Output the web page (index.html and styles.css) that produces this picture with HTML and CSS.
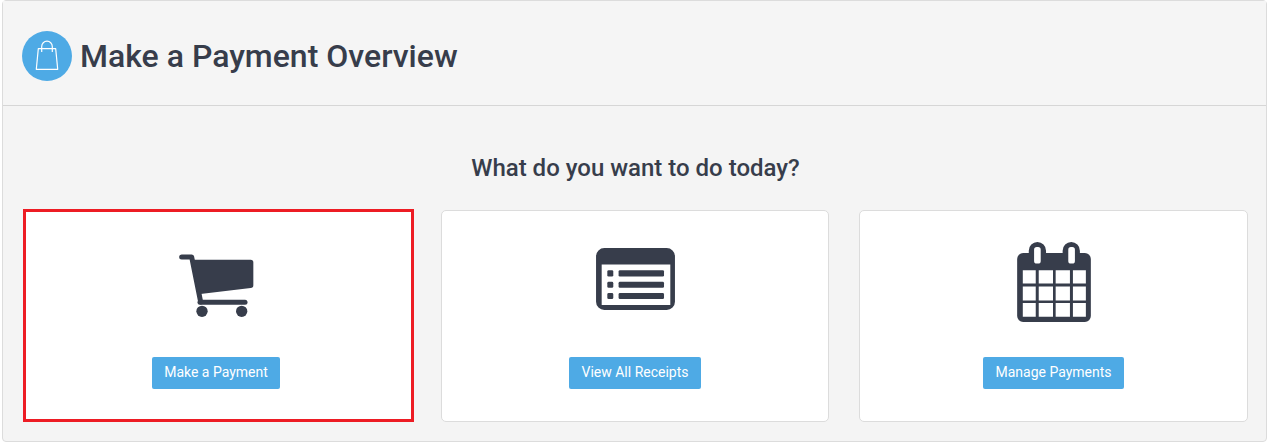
FILE: index.html
```html
<!DOCTYPE html>
<html lang="en">
<head>
    <meta charset="UTF-8">
    <meta name="viewport" content="width=device-width, initial-scale=1.0">
    <title>Make a Payment Overview</title>
    <link rel="stylesheet" href="styles.css">
</head>
<body>

    <div class="panel">
        <!-- Header -->
        <div class="panel-header">
            <span class="header-icon">
                <svg width="24" height="32" viewBox="0 -1 24 32" fill="none" stroke="#fff" stroke-width="1.2">
                    <path d="M3.300 7.700h17.400l2 20.600h-21.400z" stroke-linejoin="round"/>
                    <path d="M6.700 11v-5.500a5.300 5.300 0 0 1 10.600 0v5.500"/>
                </svg>
            </span>
            <h1>Make a Payment Overview</h1>
        </div>

        <div class="panel-body">
            <h2>What do you want to do today?</h2>

            <div class="cards">
                <div class="card card-selected">
                    <svg class="card-icon icon-cart" width="75" height="64" viewBox="117 68 225 192" fill="#373d4b">
                        <path d="M125 80H155L182 215" fill="none" stroke="#373d4b" stroke-width="15" stroke-linecap="round" stroke-linejoin="round"/>
                        <path d="M155 88H332a8 8 0 0 1 8 8V165a8 8 0 0 1-8 8L175 192z"/>
                        <path d="M180 216H315" fill="none" stroke="#373d4b" stroke-width="15" stroke-linecap="round"/>
                        <circle cx="186" cy="243" r="17"/>
                        <circle cx="305" cy="243" r="17"/>
                    </svg>
                    <a href="#" class="btn">Make a Payment</a>
                </div>

                <div class="card card-middle">
                    <svg class="card-icon icon-list" width="79" height="62" viewBox="75 55 238 187" fill="#373d4b" fill-rule="evenodd">
                        <path d="M100 55H288a25 25 0 0 1 25 25V217a25 25 0 0 1-25 25H100a25 25 0 0 1-25-25V80a25 25 0 0 1 25-25zM92 105V227H299V105z"/>
                        <rect x="109" y="122" width="18" height="19" rx="4"/>
                        <rect x="143" y="122" width="137" height="19" rx="4"/>
                        <rect x="109" y="157" width="18" height="18" rx="4"/>
                        <rect x="143" y="157" width="137" height="18" rx="4"/>
                        <rect x="109" y="191" width="18" height="18" rx="4"/>
                        <rect x="143" y="191" width="137" height="18" rx="4"/>
                    </svg>
                    <a href="#" class="btn">View All Receipts</a>
                </div>

                <div class="card">
                    <svg class="card-icon icon-calendar" width="74" height="80" viewBox="80 37 222 241" fill="#373d4b" fill-rule="evenodd">
                        <path d="M115 70V63a26 26 0 0 1 52 0V70H217V63a26 26 0 0 1 52 0V70H284a18 18 0 0 1 18 18V260a18 18 0 0 1-18 18H98a18 18 0 0 1-18-18V88a18 18 0 0 1 18-18z
                                 M131 60V94a8 8 0 0 0 8 8H143a8 8 0 0 0 8-8V60a8 8 0 0 0-8-8H139a8 8 0 0 0-8 8z
                                 M234 60V94a8 8 0 0 0 8 8H246a8 8 0 0 0 8-8V60a8 8 0 0 0-8-8H242a8 8 0 0 0-8 8z
                                 M97 122V162H136V122z M145 122V162H188V122z M196 122V162H239V122z M248 122V162H287V122z
                                 M97 171V213H136V171z M145 171V213H188V171z M196 171V213H239V171z M248 171V213H287V171z
                                 M97 221V262H136V221z M145 221V262H188V221z M196 221V262H239V221z M248 221V262H287V221z"/>
                    </svg>
                    <a href="#" class="btn">Manage Payments</a>
                </div>
            </div>
        </div>
    </div>

</body>
</html>
```

FILE: styles.css
```css
body {
    font-family: Roboto, Arial, sans-serif;
    margin: 0;
    padding: 0 1px 2px 2px;
    background-color: #ffffff;
    color: #373d4b;
}
/* Panel */
.panel {
    height: 442px;
    box-sizing: border-box;
    background-color: #f4f4f4;
    border: 1px solid #dcdcdc;
    border-radius: 4px;
}
.panel-header {
    height: 105px;
    box-sizing: border-box;
    display: flex;
    align-items: center;
    gap: 8px;
    padding: 6px 19px 0 19px;
    background-color: #f5f5f5;
    border-bottom: 1px solid #d6d6d6;
}
.header-icon {
    width: 50px;
    height: 50px;
    border-radius: 50%;
    background-color: #4eaae5;
    display: flex;
    align-items: center;
    justify-content: center;
}
h1 {
    margin: 0;
    font-size: 32px;
    font-weight: 500;
    color: #373d4b;
}
/* Body */
.panel-body {
    padding: 0 18px 0 20px;
}
h2 {
    margin: 0;
    padding-top: 49px;
    height: 55px;
    line-height: 26px;
    text-align: center;
    font-size: 24px;
    font-weight: 500;
    color: #373d4b;
}
.cards {
    display: grid;
    grid-template-columns: repeat(3, 389px);
    gap: 29px;
}
.card {
    height: 212px;
    box-sizing: border-box;
    background-color: white;
    border: 1px solid #dcdcdc;
    border-radius: 5px;
    display: flex;
    flex-direction: column;
    align-items: center;
}
.card-selected {
    width: 391px;
    height: 213px;
    margin-top: -1px;
    padding-right: 5px;
    border: 3px solid #ed1c24;
    border-radius: 0;
}
.card-middle {
    margin-right: 1px;
}
.card-icon {
    display: block;
}
.icon-cart {
    margin-top: 41px;
}
.icon-list {
    margin-top: 37px;
}
.icon-calendar {
    margin-top: 31px;
}
.btn {
    margin-top: auto;
    margin-bottom: 32px;
    height: 32px;
    line-height: 30px;
    padding: 0 12px;
    background-color: #4eaae5;
    color: white;
    text-decoration: none;
    font-size: 14px;
    border-radius: 2px;
}
.card-selected .btn {
    margin-bottom: 30px;
}
```
